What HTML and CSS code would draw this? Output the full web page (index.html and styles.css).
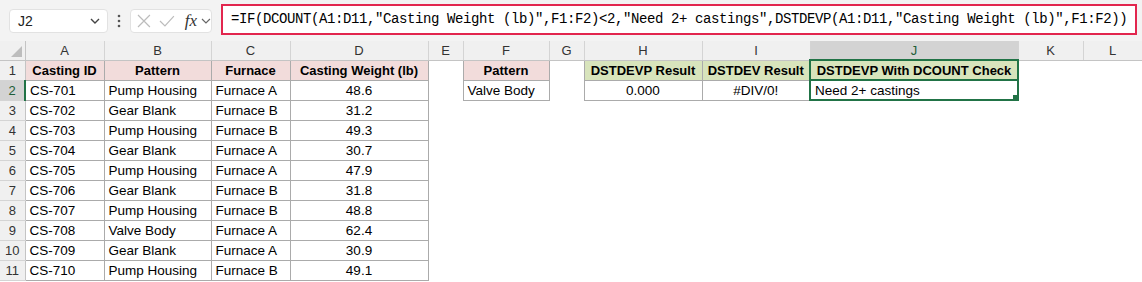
FILE: index.html
```html
<!DOCTYPE html>
<html lang="en">
<head>
    <meta charset="UTF-8">
    <meta name="viewport" content="width=device-width, initial-scale=1.0">
    <title>DSTDEVP with DCOUNT check</title>
    <link rel="stylesheet" href="styles.css">
</head>
<body>
    <div class="toolbar">
        <div class="name-box">
            <span>J2</span>
            <svg width="12" height="8" viewBox="0 0 12 8"><path d="M2 2 L6 6 L10 2" fill="none" stroke="#444" stroke-width="1.4"/></svg>
        </div>
        <svg class="dots" width="6" height="14" viewBox="0 0 6 14"><circle cx="3" cy="2" r="1.3" fill="#555"/><circle cx="3" cy="7" r="1.3" fill="#555"/><circle cx="3" cy="12" r="1.3" fill="#555"/></svg>
        <div class="fx-box">
            <svg width="14" height="14" viewBox="0 0 14 14"><path d="M1 1 L13 13 M13 1 L1 13" stroke="#bcbcbc" stroke-width="1.2"/></svg>
            <svg width="16" height="14" viewBox="0 0 16 14"><path d="M1 7 L6 12 L15 2" fill="none" stroke="#bcbcbc" stroke-width="1.2"/></svg>
            <span class="fx">fx</span>
            <svg width="10" height="8" viewBox="0 0 10 8"><path d="M1 2 L5 6 L9 2" fill="none" stroke="#666" stroke-width="1.2"/></svg>
        </div>
        <div class="formula">=IF(DCOUNT(A1:D11,"Casting Weight (lb)",F1:F2)&lt;2,"Need 2+ castings",DSTDEVP(A1:D11,"Casting Weight (lb)",F1:F2))</div>
    </div>

    <table class="sheet">
        <colgroup>
            <col style="width:25px"><col style="width:79px"><col style="width:107px"><col style="width:79px">
            <col style="width:138px"><col style="width:35px"><col style="width:86px"><col style="width:35px">
            <col style="width:118px"><col style="width:108px"><col style="width:208px"><col style="width:65px">
            <col style="width:59px">
        </colgroup>
        <tr class="col-head">
            <th class="corner"></th>
            <th>A</th><th>B</th><th>C</th><th>D</th><th>E</th><th>F</th>
            <th>G</th><th>H</th><th>I</th><th class="active">J</th><th>K</th><th>L</th>
        </tr>
        <tr>
            <th class="row-head">1</th>
            <td class="b pink">Casting ID</td><td class="b pink">Pattern</td><td class="b pink">Furnace</td><td class="b pink">Casting Weight (lb)</td>
            <td></td><td class="b pink">Pattern</td><td></td>
            <td class="b green">DSTDEVP Result</td><td class="b green">DSTDEV Result</td><td class="b green j1">DSTDEVP With DCOUNT Check</td>
            <td></td><td></td>
        </tr>
        <tr>
            <th class="row-head active">2</th>
            <td class="b">CS-701</td><td class="b">Pump Housing</td><td class="b">Furnace A</td><td class="b num">48.6</td>
            <td></td><td class="b">Valve Body</td><td></td>
            <td class="b num">0.000</td><td class="b num">#DIV/0!</td><td class="b selected">Need 2+ castings</td>
            <td></td><td></td>
        </tr>
        <tr>
            <th class="row-head">3</th>
            <td class="b">CS-702</td><td class="b">Gear Blank</td><td class="b">Furnace B</td><td class="b num">31.2</td>
            <td></td><td></td><td></td><td></td><td></td><td></td><td></td><td></td>
        </tr>
        <tr>
            <th class="row-head">4</th>
            <td class="b">CS-703</td><td class="b">Pump Housing</td><td class="b">Furnace B</td><td class="b num">49.3</td>
            <td></td><td></td><td></td><td></td><td></td><td></td><td></td><td></td>
        </tr>
        <tr>
            <th class="row-head">5</th>
            <td class="b">CS-704</td><td class="b">Gear Blank</td><td class="b">Furnace A</td><td class="b num">30.7</td>
            <td></td><td></td><td></td><td></td><td></td><td></td><td></td><td></td>
        </tr>
        <tr>
            <th class="row-head">6</th>
            <td class="b">CS-705</td><td class="b">Pump Housing</td><td class="b">Furnace A</td><td class="b num">47.9</td>
            <td></td><td></td><td></td><td></td><td></td><td></td><td></td><td></td>
        </tr>
        <tr>
            <th class="row-head">7</th>
            <td class="b">CS-706</td><td class="b">Gear Blank</td><td class="b">Furnace B</td><td class="b num">31.8</td>
            <td></td><td></td><td></td><td></td><td></td><td></td><td></td><td></td>
        </tr>
        <tr>
            <th class="row-head">8</th>
            <td class="b">CS-707</td><td class="b">Pump Housing</td><td class="b">Furnace B</td><td class="b num">48.8</td>
            <td></td><td></td><td></td><td></td><td></td><td></td><td></td><td></td>
        </tr>
        <tr>
            <th class="row-head">9</th>
            <td class="b">CS-708</td><td class="b">Valve Body</td><td class="b">Furnace A</td><td class="b num">62.4</td>
            <td></td><td></td><td></td><td></td><td></td><td></td><td></td><td></td>
        </tr>
        <tr>
            <th class="row-head">10</th>
            <td class="b">CS-709</td><td class="b">Gear Blank</td><td class="b">Furnace A</td><td class="b num">30.9</td>
            <td></td><td></td><td></td><td></td><td></td><td></td><td></td><td></td>
        </tr>
        <tr>
            <th class="row-head">11</th>
            <td class="b">CS-710</td><td class="b">Pump Housing</td><td class="b">Furnace B</td><td class="b num">49.1</td>
            <td></td><td></td><td></td><td></td><td></td><td></td><td></td><td></td>
        </tr>
    </table>
</body>
</html>
```

FILE: styles.css
```css
body {
    margin: 0;
    background: #fff;
    font-family: "Liberation Sans", Arial, sans-serif;
    color: #000;
    overflow: hidden;
}
.toolbar {
    display: flex;
    align-items: center;
    height: 41px;
    background: #f3f3f3;
    box-sizing: border-box;
}
.name-box {
    display: flex;
    align-items: center;
    justify-content: space-between;
    width: 99px;
    height: 24px;
    margin-left: 9px;
    padding: 0 6px 0 8px;
    box-sizing: border-box;
    background: #fff;
    border: 1px solid #e2e2e2;
    border-radius: 4px;
    font-size: 14px;
    color: #222;
}
.dots {
    margin-left: 8px;
}
.fx-box {
    display: flex;
    align-items: center;
    gap: 8px;
    width: 82px;
    height: 24px;
    margin-left: 8px;
    padding-left: 6px;
    box-sizing: border-box;
    background: #fff;
    border: 1px solid #e2e2e2;
    border-radius: 4px;
}
.fx {
    font-family: "Liberation Serif", serif;
    font-style: italic;
    font-size: 17px;
    color: #333;
    margin-left: 2px;
    margin-right: -4px;
}
.formula {
    flex: 1;
    height: 31px;
    margin: -3px 5px 0 9px;
    padding-left: 8px;
    box-sizing: border-box;
    background: #fff;
    border: 2px solid #e2264e;
    font-family: "Liberation Mono", monospace;
    font-size: 14px;
    letter-spacing: -0.4px;
    line-height: 27px;
    white-space: nowrap;
    overflow: hidden;
}
.sheet {
    border-collapse: collapse;
    table-layout: fixed;
    width: 1142px;
    font-size: 13.5px;
}
.sheet td, .sheet th {
    height: 20px;
    padding: 0 4px;
    white-space: nowrap;
    overflow: hidden;
    box-sizing: border-box;
}
.col-head th {
    height: 19px;
    background: #f0f0f0;
    border-right: 1px solid #d4d4d4;
    border-bottom: 1px solid #c4c4c4;
    font-weight: normal;
    font-size: 13px;
    color: #333;
    text-align: center;
}
.col-head th.corner {
    position: relative;
    border-right: 1px solid #c4c4c4;
}
.corner::after {
    content: "";
    position: absolute;
    right: 3px;
    bottom: 3px;
    border-left: 11px solid transparent;
    border-bottom: 11px solid #bdbdbd;
}
.col-head th.active {
    background: #d3d3d3;
    color: #1e5e38;
    border-bottom: 2px solid #217346;
}
.row-head {
    background: #f0f0f0;
    border-right: 1px solid #c4c4c4;
    border-bottom: 1px solid #d4d4d4;
    font-weight: normal;
    font-size: 13px;
    color: #333;
    text-align: center;
}
.sheet th.row-head {
    padding: 0;
}
.row-head.active {
    background: #d3d3d3;
    color: #1e5e38;
    border-right: 2px solid #217346;
}
.b {
    border: 1px solid #ababab;
}
.pink {
    background: #f2dcdb;
    font-weight: bold;
    font-size: 13px;
    text-align: center;
}
.green {
    background: #d8e4bc;
    font-weight: bold;
    font-size: 13px;
    text-align: center;
}
.sheet td.j1 {
    border-left: 2px solid #217346;
    border-right: 2px solid #217346;
}
.num {
    text-align: center;
}
.sheet td.selected {
    position: relative;
    border: 2px solid #217346;
}
.selected::after {
    content: "";
    position: absolute;
    right: -3px;
    bottom: -3px;
    width: 6px;
    height: 6px;
    background: #217346;
    border: 1px solid #fff;
}
```
